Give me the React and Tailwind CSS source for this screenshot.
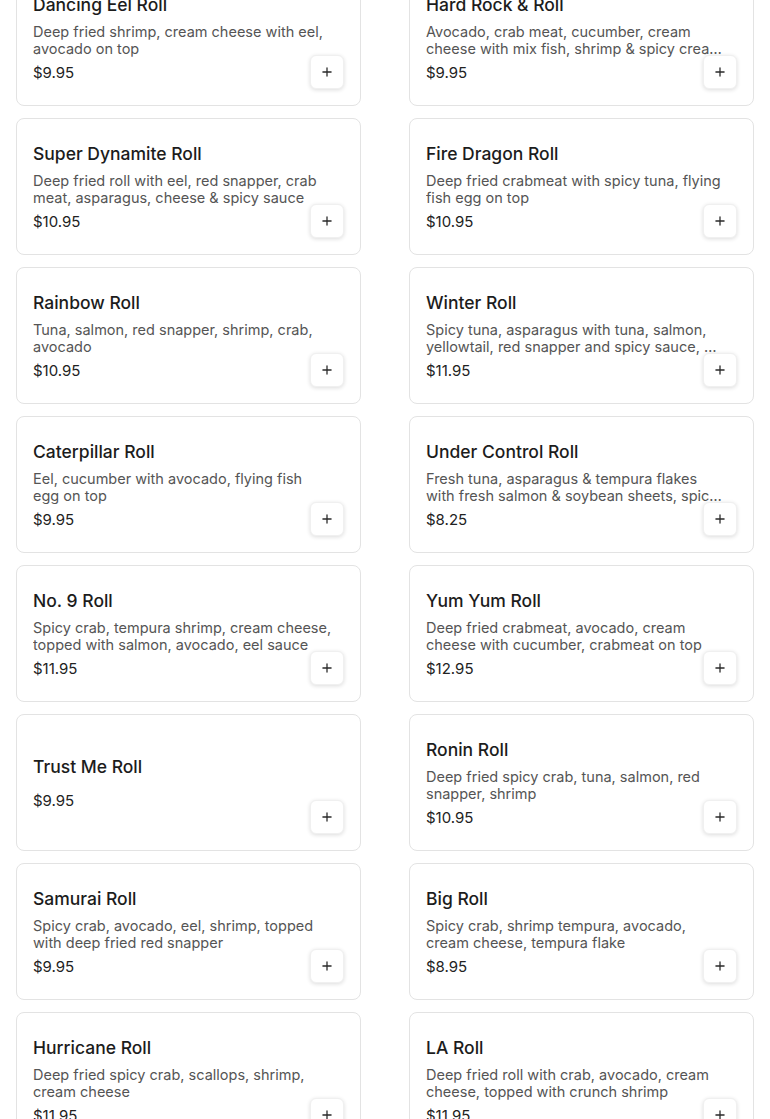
import { Plus } from "lucide-react";

const rolls = [
  { name: "Dancing Eel Roll", desc: "Deep fried shrimp, cream cheese with eel, avocado on top", price: "$9.95" },
  { name: "Hard Rock & Roll", desc: "Avocado, crab meat, cucumber, cream cheese with mix fish, shrimp & spicy cream sauce", price: "$9.95" },
  { name: "Super Dynamite Roll", desc: "Deep fried roll with eel, red snapper, crab meat, asparagus, cheese & spicy sauce", price: "$10.95" },
  { name: "Fire Dragon Roll", desc: "Deep fried crabmeat with spicy tuna, flying fish egg on top", price: "$10.95" },
  { name: "Rainbow Roll", desc: "Tuna, salmon, red snapper, shrimp, crab, avocado", price: "$10.95" },
  { name: "Winter Roll", desc: "Spicy tuna, asparagus with tuna, salmon, yellowtail, red snapper and spicy sauce, eel sauce", price: "$11.95" },
  { name: "Caterpillar Roll", desc: "Eel, cucumber with avocado, flying fish egg on top", price: "$9.95" },
  { name: "Under Control Roll", desc: "Fresh tuna, asparagus & tempura flakes with fresh salmon & soybean sheets, spicy mayo", price: "$8.25" },
  { name: "No. 9 Roll", desc: "Spicy crab, tempura shrimp, cream cheese, topped with salmon, avocado, eel sauce", price: "$11.95" },
  { name: "Yum Yum Roll", desc: "Deep fried crabmeat, avocado, cream cheese with cucumber, crabmeat on top", price: "$12.95" },
  { name: "Trust Me Roll", desc: "", price: "$9.95" },
  { name: "Ronin Roll", desc: "Deep fried spicy crab, tuna, salmon, red snapper, shrimp", price: "$10.95" },
  { name: "Samurai Roll", desc: "Spicy crab, avocado, eel, shrimp, topped with deep fried red snapper", price: "$9.95" },
  { name: "Big Roll", desc: "Spicy crab, shrimp tempura, avocado, cream cheese, tempura flake", price: "$8.95" },
  { name: "Hurricane Roll", desc: "Deep fried spicy crab, scallops, shrimp, cream cheese", price: "$11.95" },
  { name: "LA Roll", desc: "Deep fried roll with crab, avocado, cream cheese, topped with crunch shrimp", price: "$11.95" },
];

function RollCard({ item }) {
  return (
    <div className="relative h-[137px] rounded-lg border border-[#e3e3e3] bg-white px-4 flex flex-col justify-center gap-1">
      <div className="text-[17.5px] leading-7 font-medium text-[#1c1c1c]">{item.name}</div>
      <div className="w-[298.5px] text-[14.5px] leading-[17px] text-[#555] line-clamp-2">{item.desc}</div>
      <div className="text-[15px] leading-6 text-[#222]">{item.price}</div>
      <button className="absolute right-4 bottom-4 h-[34px] w-[34px] rounded-md bg-white border border-[#f0f0f0] shadow-[0_1px_4px_rgba(0,0,0,0.14)] grid place-items-center text-[#2a2a2a]">
        <Plus size={14} strokeWidth={2.2} />
      </button>
    </div>
  );
}

export default function App() {
  return (
    <div className="min-h-screen bg-white overflow-hidden font-['Inter',sans-serif]">
      <div className="-mt-[31px] px-4 grid grid-cols-2 gap-x-12 gap-y-3">
        {rolls.map((r) => <RollCard key={r.name} item={r} />)}
      </div>
    </div>
  );
}
